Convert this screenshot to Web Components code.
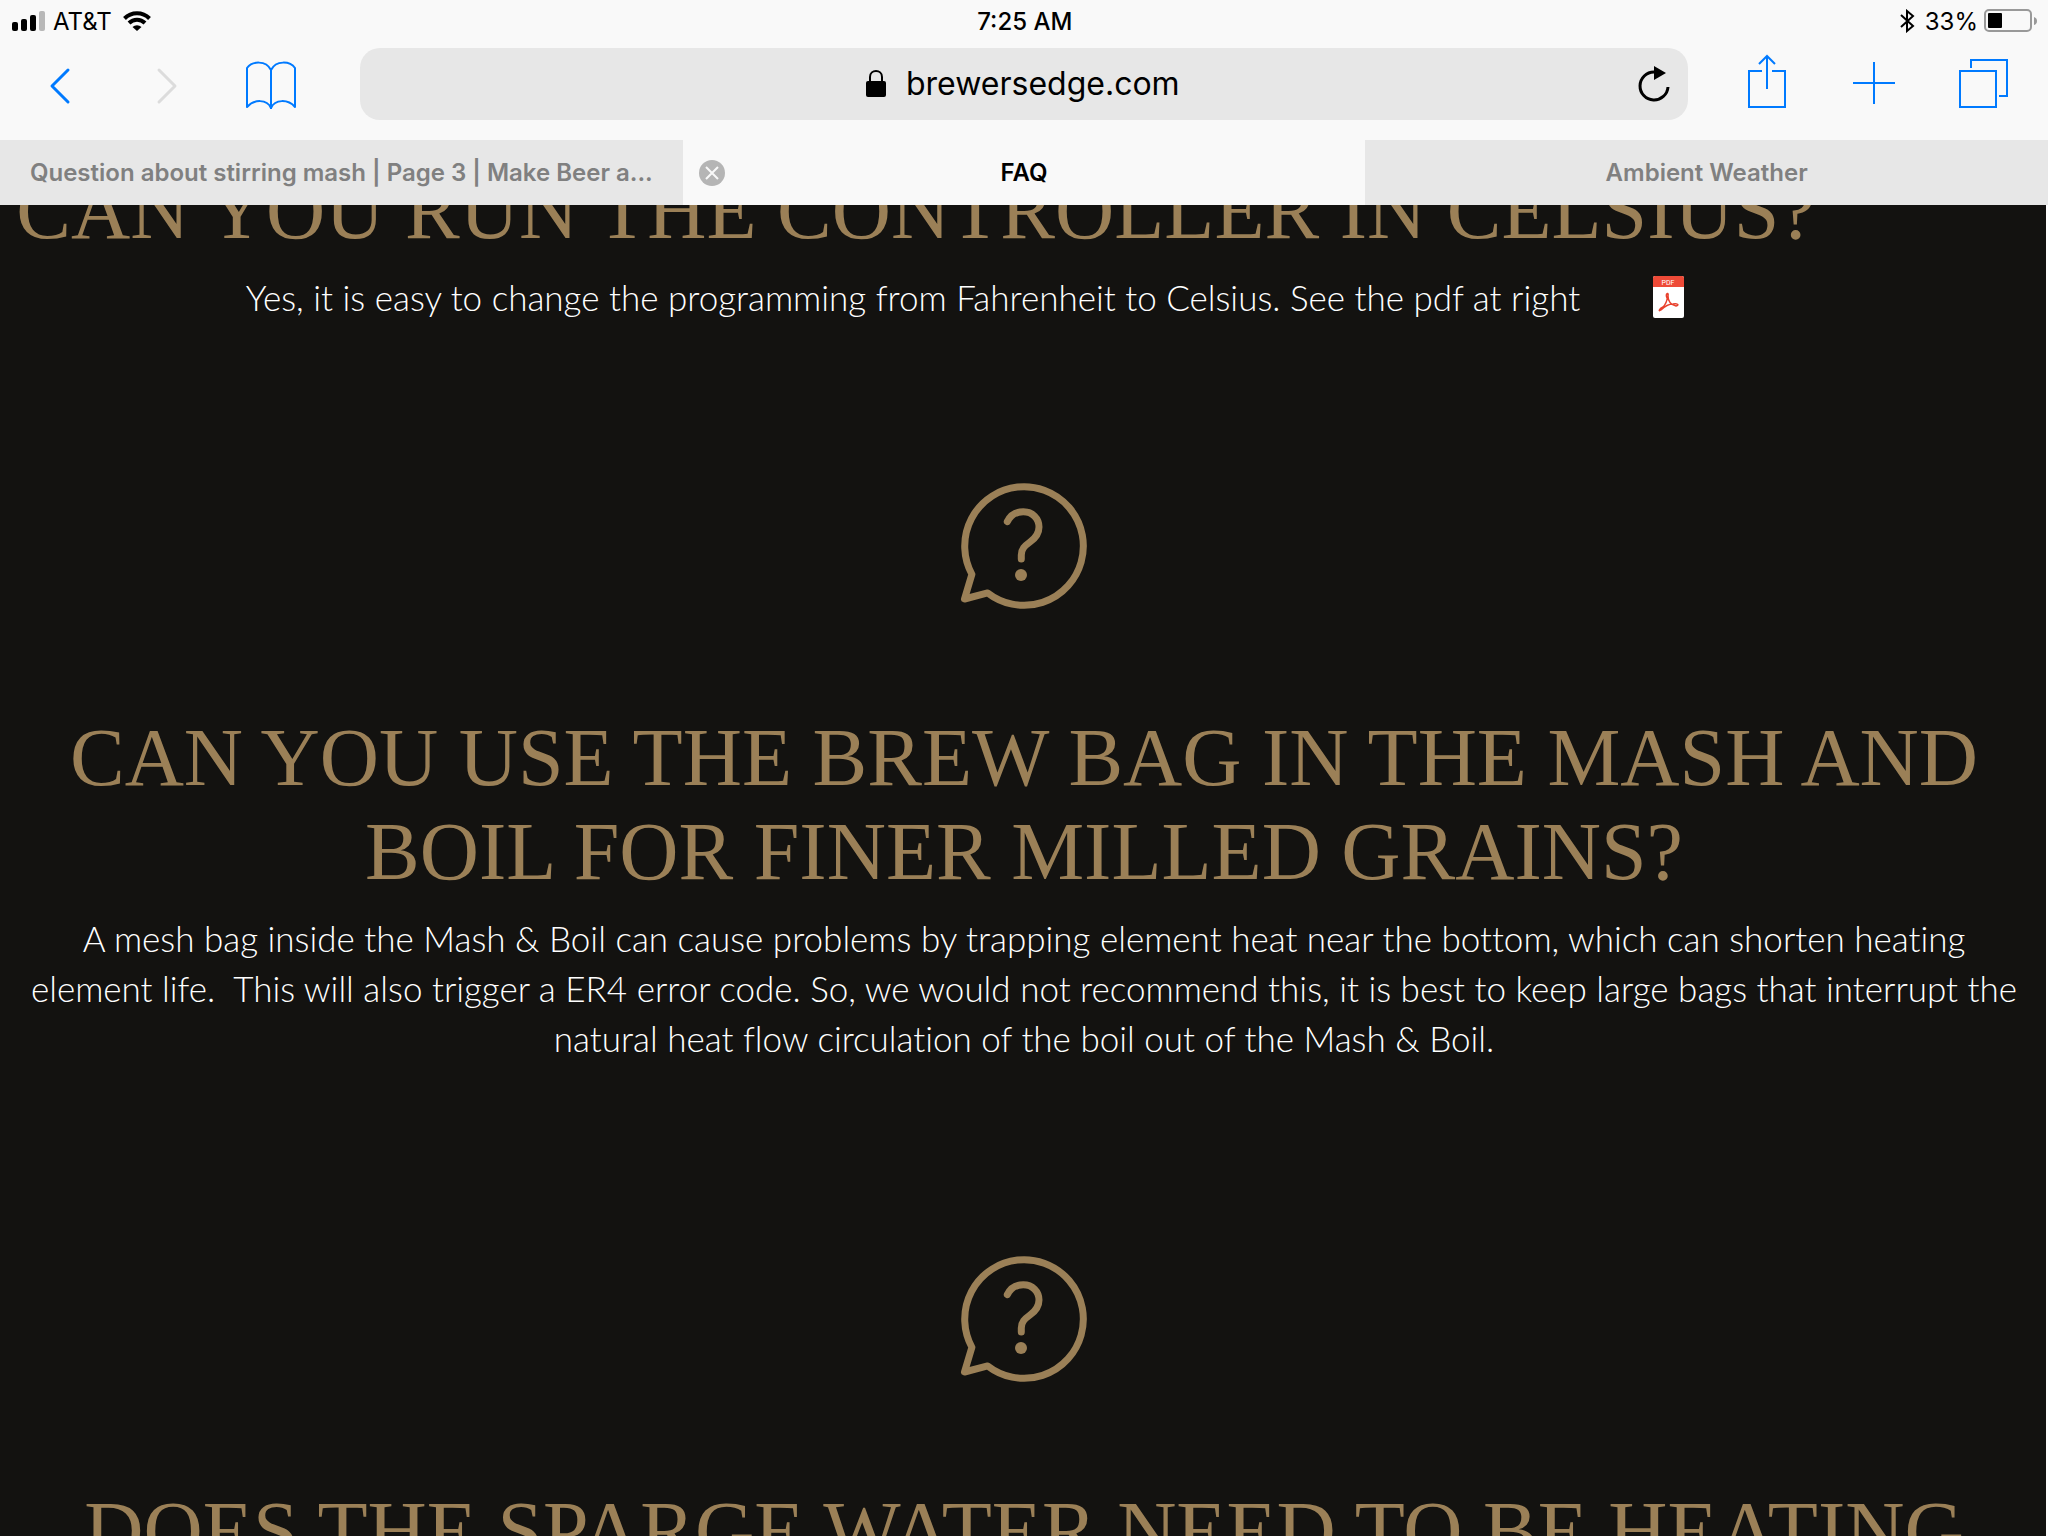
<!DOCTYPE html>
<html lang="en">
<head>
<meta charset="utf-8">
<title>FAQ</title>
<style>
html, body {
    height: 100%;
    margin: 0
}
body {
    display: flex;
    flex-direction: column;
    overflow: hidden;
    background: #fff;
    color: #000;
    font-family: Inter, "Liberation Sans", sans-serif
}
</style>
</head>
<body>
<status-bar carrier="AT&amp;T" time="7:25 AM" battery="33%"></status-bar>
<tool-bar url="brewersedge.com"></tool-bar>
<tab-strip>
    <browser-tab>Question about stirring mash | Page 3 | Make Beer a...</browser-tab>
    <browser-tab active>FAQ</browser-tab>
    <browser-tab>Ambient Weather</browser-tab>
</tab-strip>
<faq-page>
    <faq-item class="aside">
        <span slot="question">CAN YOU RUN THE CONTROLLER IN CELSIUS?</span>
        Yes, it is easy to change the programming from Fahrenheit to Celsius. See the pdf at right
        <pdf-link slot="file"></pdf-link>
    </faq-item>
    <faq-item icon>
        <span slot="question">CAN YOU USE THE BREW BAG IN THE MASH AND BOIL FOR FINER MILLED GRAINS?</span>
        A mesh bag inside the Mash &amp; Boil can cause problems by trapping element heat near the bottom, which can shorten heating element life.&nbsp; This will also trigger a ER4 error code. So, we would not recommend this, it is best to keep large bags that interrupt the natural heat flow circulation of the boil out of the Mash &amp; Boil.
    </faq-item>
    <faq-item icon>
        <span slot="question">DOES THE SPARGE WATER NEED TO BE HEATING</span>
    </faq-item>
</faq-page>

<script>
// every element clones its own template into an open shadow root
class BaseElement extends HTMLElement {
    constructor() {
        super()
        const template = document.createElement('template')
        template.innerHTML = this.constructor.html
        this.attachShadow({mode: 'open'})
        this.shadowRoot.appendChild(template.content.cloneNode(true))
    }

    $(selector) {
        return this.shadowRoot.querySelector(selector)
    }
}

class StatusBar extends BaseElement {
    static html = `
<style>
:host {
    display: flex;
    justify-content: space-between;
    align-items: center;
    height: 42px;
    padding: 0 10px 0 12px;
    background: #f9f9f9;
    font-size: 24px
}
div {
    display: flex;
    align-items: center
}
.left { gap: 7px }
.wifi { margin-left: 4px }
.time { font-weight: 500 }
.battery { margin-left: 6px }
.bluetooth { margin-right: 10px }
svg { display: block }
</style>
<div class="left">
    <svg width="34" height="20" aria-hidden="true">
        <rect y="11" width="6" height="9" rx="2"/>
        <rect x="9" y="8" width="6" height="12" rx="2"/>
        <rect x="18" y="4" width="6" height="16" rx="2"/>
        <rect x="27" width="6" height="20" rx="2" fill="#b8b8b8"/>
    </svg>
    <span class="carrier"></span>
    <svg class="wifi" width="28" height="20" fill="none" stroke="#000" stroke-width="4" aria-hidden="true">
        <path d="M1.5 7.5C8.5 .5 19.500 .5 26.500 7.500"/>
        <path d="M6 12C10.500 7.600 17.500 7.600 22 12"/>
        <path d="M9.500 16A6.500 6.500 0 0 1 18.500 16L14 20Z" fill="#000" stroke="none"/>
    </svg>
</div>
<div class="time"></div>
<div class="right">
    <svg class="bluetooth" width="16" height="24" fill="none" stroke="#000" stroke-width="2" aria-hidden="true">
        <path d="M2 6L14 17L8 22V2L14 7L2 18"/>
    </svg>
    <span class="level"></span>
    <svg class="battery" width="54" height="24" aria-hidden="true">
        <rect x="1" y="1" width="46" height="21" rx="4" fill="none" stroke="#999" stroke-width="2"/>
        <rect x="4" y="4" width="14" height="15" rx="1"/>
        <path d="M50 8Q53 9 53 12T50 16Z" fill="#999"/>
    </svg>
</div>`

    connectedCallback() {
        this.$('.carrier').textContent = this.getAttribute('carrier')
        this.$('.time').textContent = this.getAttribute('time')
        this.$('.level').textContent = this.getAttribute('battery')
    }
}
window.customElements.define('status-bar', StatusBar)

class ToolBar extends BaseElement {
    static html = `
<style>
:host {
    display: flex;
    align-items: center;
    gap: 47px;
    padding: 6px 37px 20px 30px;
    background: #f9f9f9
}
button {
    padding: 0;
    border: none;
    background: none;
    cursor: pointer
}
svg {
    display: block;
    fill: none;
    stroke: #007aff;
    stroke-width: 2
}
button:disabled svg { stroke: #dcdcdc }
.chevron {
    stroke-width: 3;
    stroke-linecap: round;
    stroke-linejoin: round
}
.address {
    flex: 1;
    display: grid;
    grid-template-columns: 1fr auto 1fr;
    align-items: center;
    height: 72px;
    margin: 0 2px 0 9px;
    border-radius: 20px;
    background: #e7e7e7
}
label {
    grid-column: 2;
    display: flex;
    align-items: center;
    gap: 20px
}
input {
    width: 276px;
    padding: 0;
    border: none;
    outline: none;
    background: none;
    color: #000;
    font: 32px/40px Inter, "Liberation Sans", sans-serif
}
.reload {
    justify-self: end;
    margin-right: 14px
}
.reload svg {
    stroke: #000;
    stroke-width: 3
}
label .lock { stroke: #000 }
</style>
<button aria-label="Back"><svg class="chevron" width="60" height="72"><path d="M38 22L22 38L38 54"/></svg></button>
<button aria-label="Forward" disabled><svg class="chevron" width="60" height="72"><path d="M22 22L38 38L22 54"/></svg></button>
<button aria-label="Bookmarks"><svg width="60" height="72" stroke-linejoin="round">
    <path d="M3 20C8 13 22 12 27 22C32 12 46 13 51 20V59C44 51 31 51 27 60C23 51 10 51 3 59Z"/>
    <path d="M27 22V61"/>
</svg></button>
<div class="address">
    <label>
        <svg class="lock" width="20" height="28" role="img" aria-label="Secure">
            <path d="M4 13V7C4 -1 16 -1 16 7V13"/>
            <rect y="11" width="20" height="16" rx="2" fill="#000" stroke="none"/>
        </svg>
        <input type="text" aria-label="Address" spellcheck="false">
    </label>
    <button class="reload" aria-label="Reload"><svg width="40" height="44">
        <path d="M34 25A14 14 0 1 1 20 10"/>
        <path d="M20 4L32 11L20 18Z" fill="#000" stroke="none"/>
    </svg></button>
</div>
<button aria-label="Share"><svg width="60" height="72">
    <path d="M25 23H12V59H48V23H35"/>
    <path d="M30 41V9M22 16L30 8L38 16"/>
</svg></button>
<button aria-label="New tab"><svg width="60" height="72"><path d="M9 35H51M30 14V56"/></svg></button>
<button aria-label="Show tabs"><svg width="60" height="72">
    <path d="M9 23H45V59H9Z"/>
    <path d="M20 20V12H56V48H48"/>
</svg></button>`

    connectedCallback() {
        this.$('input').value = this.getAttribute('url')
    }
}
window.customElements.define('tool-bar', ToolBar)

class TabStrip extends BaseElement {
    static html = `
<style>
:host {
    display: grid;
    grid-template-columns: repeat(3, minmax(0, 1fr));
    height: 65px
}
</style>
<slot></slot>`
}
window.customElements.define('tab-strip', TabStrip)

class BrowserTab extends BaseElement {
    static html = `
<style>
:host {
    display: grid;
    grid-template-columns: 1fr auto 1fr;
    align-items: center;
    padding: 0 16px;
    background: #e7e7e7;
    color: #808080;
    font-size: 24px;
    font-weight: 600;
    white-space: nowrap
}
:host([active]) {
    background: #f9f9f9;
    color: #000
}
.title { grid-column: 2 }
button {
    display: none;
    grid-area: 1 / 1;
    justify-self: start;
    padding: 0;
    border: none;
    background: none;
    cursor: pointer
}
:host([active]) button { display: block }
svg { display: block }
</style>
<button aria-label="Close tab"><svg width="26" height="26">
    <circle cx="13" cy="13" r="13" fill="#b5b5b5"/>
    <path d="M7 7L19 19M19 7L7 19" stroke="#f9f9f9" stroke-width="2"/>
</svg></button>
<span class="title"><slot></slot></span>`

    connectedCallback() {
        this.$('button').addEventListener('click', () => this.remove())
    }
}
window.customElements.define('browser-tab', BrowserTab)

class FaqPage extends BaseElement {
    static html = `
<style>
:host {
    display: block;
    flex: 1;
    min-height: 0;
    margin-right: 2px;
    padding-left: 2px;
    overflow: hidden;
    background: #131210
}
/* the page is scrolled part of the way down */
.scrolled { margin-top: -41px }
::slotted(.aside) {
    --question-inset: 216px;
    --answer-inset: 142px;
    --answer-end: 159px
}
</style>
<div class="scrolled"><slot></slot></div>`
}
window.customElements.define('faq-page', FaqPage)

class FaqItem extends BaseElement {
    static html = `
<style>
:host {
    display: flow-root;
    text-align: center
}
.bubble {
    display: none;
    margin: 0 auto 100px
}
:host([icon]) .bubble { display: block }
h2 {
    margin: 0 0 14px;
    padding: 0 var(--question-inset, 0) 0 0;
    color: #9b8057;
    font: 400 82px/94px "Liberation Serif", serif
}
.answer {
    display: flex;
    justify-content: center;
    align-items: center;
    gap: 49px;
    padding: 0 var(--answer-inset, 0) var(--answer-end, 191px) 0
}
p {
    margin: 0;
    padding: 0 24px;
    color: #fff;
    font: 300 35px/50px Lato, sans-serif;
    font-variant-ligatures: none
}
</style>
<svg class="bubble" width="130" height="130" fill="none" stroke="#9b8057" stroke-width="7" stroke-linejoin="round" stroke-linecap="round" aria-hidden="true">
    <path d="M12.900 93.300L5.500 118L28.700 111.900A59.300 59.300 0 1 0 12.900 93.300Z"/>
    <path d="M48.300 40.600C51.500 34 57 30.700 64.300 30.700C73.500 30.700 80 37.500 80 46C80 53 76 57.500 71 61C65.500 65 62.300 68 62.300 74V78"/>
    <circle cx="62" cy="94" r="6" fill="#9b8057" stroke="none"/>
</svg>
<h2><slot name="question"></slot></h2>
<div class="answer"><p><slot></slot></p><slot name="file"></slot></div>`
}
window.customElements.define('faq-item', FaqItem)

class PdfLink extends BaseElement {
    static html = `
<style>
:host { display: block }
a, svg { display: block }
</style>
<a href="#pdf" aria-label="PDF file"><svg width="31" height="42">
    <rect width="31" height="42" rx="2" fill="#fff"/>
    <path d="M0 11V2Q0 0 2 0H29Q31 0 31 2V11Z" fill="#ee4a37"/>
    <text x="15" y="9" fill="#fff" font-family="Roboto, sans-serif" font-size="7" text-anchor="middle">PDF</text>
    <path d="M14 22C12 17 16 16 15 20C15 25 18 29 23 30C27 29 24 27 20 28C15 28 11 31 8 34C5 36 6 33 10 31C13 28 14 25 14.500 21" fill="none" stroke="#e8402c" stroke-width="1.500"/>
</svg></a>`
}
window.customElements.define('pdf-link', PdfLink)
</script>
</body>
</html>
